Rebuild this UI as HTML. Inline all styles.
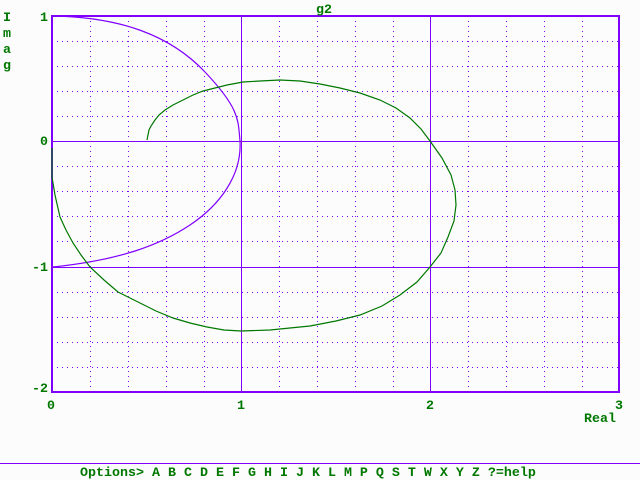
<!DOCTYPE html>
<html><head><style>
html,body{margin:0;padding:0;background:#fcfcfc;}
svg{display:block}
text{font-family:"Liberation Mono",monospace;font-weight:bold;font-size:13.33px;fill:#007800}
</style></head><body>
<svg width="640" height="480" viewBox="0 0 640 480" xmlns="http://www.w3.org/2000/svg">
<g stroke="#8000ff" stroke-width="1" fill="none" stroke-dasharray="1 4" shape-rendering="crispEdges">
<path d="M90.5 16V392M128.5 16V392M166.5 16V392M204.5 16V392M279.5 16V392M317.5 16V392M355.5 16V392M393.5 16V392M468.5 16V392M506.5 16V392M544.5 16V392M582.5 16V392"/>
<path d="M52 41.5H619M52 66.5H619M52 91.5H619M52 116.5H619M52 166.5H619M52 191.5H619M52 216.5H619M52 241.5H619M52 292.5H619M52 317.5H619M52 342.5H619M52 367.5H619"/>
</g>
<g fill="#8000ff" shape-rendering="crispEdges">
<rect x="241" y="16" width="1" height="376"/>
<rect x="430" y="16" width="1" height="376"/>
<rect x="52" y="141" width="567" height="1"/>
<rect x="52" y="267" width="567" height="1"/>
<rect x="0" y="463" width="640" height="1"/>
</g>
<rect x="52" y="16" width="567" height="376" fill="none" stroke="#8000ff" stroke-width="2" shape-rendering="crispEdges"/>
<path fill="none" stroke="#8000ff" stroke-width="1.2" d="M52,16 C120,17 170,35 205,72 S238,120 240,141 C242,175 220,205 190,225 S120,260 53,267"/>
<polyline fill="none" stroke="#007800" stroke-width="1.2" points="52,148 52,177 55,195 60,217 66,230 73,243 81,255 90,267 104,280 118,292 140,303 156,311 173,318 190,323 207,327 224,330 241,331 270,330 310,326 336,321 360,315 382,306 400,295 417,282 430,267 441,253 448,237 454,221 456,205 455,190 451,175 442,158 430,141 421,129 410,118 396,108 380,100 360,93 340,88 320,84 300,81 280,80 260,81 243,82 227,85 215,88 203,91 193,95 183,100 173,105 165,110 159,115 155,120 151,126 149,130 148,135 147,140"/>
<text x="316" y="13">g2</text>
<text x="3" y="21">I</text>
<text x="3" y="37">m</text>
<text x="3" y="53">a</text>
<text x="3" y="69">g</text>
<text x="40" y="21">1</text>
<text x="40" y="145">0</text>
<text x="32" y="271">-1</text>
<text x="32" y="392">-2</text>
<text x="47" y="409">0</text>
<text x="237" y="409">1</text>
<text x="426" y="409">2</text>
<text x="615" y="409">3</text>
<text x="584" y="422">Real</text>
<text x="80" y="476">Options&gt; A B C D E F G H I J K L M P Q S T W X Y Z ?=help</text>
</svg>
</body></html>
